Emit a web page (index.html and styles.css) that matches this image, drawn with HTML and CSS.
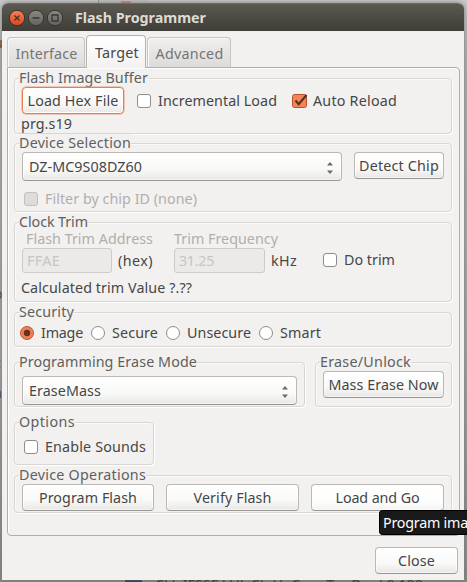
FILE: index.html
```html
<!DOCTYPE html>
<html lang="en">
<head>
<meta charset="utf-8">
<title>Flash Programmer</title>
<link rel="stylesheet" href="styles.css">
</head>
<body>
<div class="desktop" aria-hidden="true">
  <i class="bit top"></i><i class="bit orange"></i><i class="bit navy"></i>
  <span class="behind">CLL IFSSF LUL Ch H- C--- - T--- D- --l 0 100</span>
  <span class="edge e1">u</span><span class="edge e2">o</span><span class="edge e3">z</span><span class="edge e4">a</span>
</div>
<main class="window">
  <header class="titlebar">
    <svg class="controls" width="56" height="18" viewBox="0 0 56 18">
      <defs>
        <linearGradient id="red" x1="0" y1="0" x2="0" y2="1"><stop offset="0" stop-color="#f98058"/><stop offset="1" stop-color="#dc4717"/></linearGradient>
        <linearGradient id="gray" x1="0" y1="0" x2="0" y2="1"><stop offset="0" stop-color="#8b8982"/><stop offset="1" stop-color="#62615b"/></linearGradient>
      </defs>
      <g stroke="#34332e"><circle cx="9" cy="9" r="7.7" fill="url(#red)"/><circle cx="28" cy="9" r="7.7" fill="url(#gray)"/><circle cx="47" cy="9" r="7.7" fill="url(#gray)"/></g>
      <g fill="none" stroke="#3a3530" stroke-width="1.3"><path d="M6.5 6.5l5 5M11.5 6.5l-5 5M24.5 9h7"/><path d="M44 6h6v6h-6z"/></g>
    </svg>
    <h1 data-w="131">Flash Programmer</h1>
  </header>
  <nav class="tabs">
    <div class="tab t-interface"><span data-w="62">Interface</span></div>
    <div class="tab active"><span data-w="44">Target</span></div>
    <div class="tab t-advanced"><span data-w="68">Advanced</span></div>
  </nav>
  <section class="pane">
    <div class="group g-buffer">
      <div class="legend"><span data-w="129">Flash Image Buffer</span></div>
      <div class="row r-load">
        <div class="btn focus"><span data-w="91">Load Hex File</span></div>
        <i class="check c-inc"></i><span data-w="119">Incremental Load</span>
        <svg class="checked" width="17" height="16" viewBox="0 0 17 16"><rect x=".5" y="1.5" width="14" height="13" rx="2" fill="#f28457" stroke="#b7522d"/><path d="M3.5 7.5l3.2 3.7L14.5 2" fill="none" stroke="#5b2c1c" stroke-width="2"/></svg>
        <span data-w="84">Auto Reload</span>
      </div>
      <div class="file"><span data-w="51">prg.s19</span></div>
    </div>
    <div class="group g-device">
      <div class="legend"><span data-w="112">Device Selection</span></div>
      <div class="row r-device">
        <div class="btn combo wide"><span data-w="113">DZ-MC9S08DZ60</span><svg width="6" height="12" viewBox="0 0 6 12"><path d="M0 3.5L3 0l3 3.5zM0 8.5L3 12l3-3.5z" fill="#6a6a68"/></svg></div>
        <div class="btn detect"><span data-w="80">Detect Chip</span></div>
      </div>
      <div class="row r-filter dim"><i class="check off"></i><span data-w="152">Filter by chip ID (none)</span></div>
    </div>
    <div class="group g-clock">
      <div class="legend"><span data-w="69">Clock Trim</span></div>
      <div class="row r-labels dim"><span class="addr"><span data-w="127">Flash Trim Address</span></span><span data-w="104">Trim Frequency</span></div>
      <div class="row r-trim">
        <div class="field"><span data-w="33">FFAE</span></div><span class="unit hex"><span data-w="35">(hex)</span></span>
        <div class="field freq"><span data-w="35">31.25</span></div><span class="unit khz"><span data-w="26">kHz</span></span>
        <i class="check"></i><span class="dotrim" data-w="51">Do trim</span>
      </div>
      <div class="calc"><span data-w="171">Calculated trim Value ?.??</span></div>
    </div>
    <div class="group g-security">
      <div class="legend"><span data-w="55">Security</span></div>
      <div class="row radios">
        <i class="radio on"></i><span class="o1"><span data-w="42">Image</span></span>
        <i class="radio"></i><span class="o2"><span data-w="46">Secure</span></span>
        <i class="radio"></i><span class="o3"><span data-w="64">Unsecure</span></span>
        <i class="radio"></i><span data-w="41">Smart</span>
      </div>
    </div>
    <div class="pair">
      <div class="group g-mode">
        <div class="legend"><span data-w="178">Programming Erase Mode</span></div>
        <div class="btn combo"><span data-w="72">EraseMass</span><svg width="6" height="12" viewBox="0 0 6 12"><path d="M0 3.5L3 0l3 3.5zM0 8.5L3 12l3-3.5z" fill="#6a6a68"/></svg></div>
      </div>
      <div class="group g-erase">
        <div class="legend"><span data-w="91">Erase/Unlock</span></div>
        <div class="btn"><span data-w="110">Mass Erase Now</span></div>
      </div>
    </div>
    <div class="group g-options">
      <div class="legend"><span data-w="56">Options</span></div>
      <div class="row r-sounds"><i class="check"></i><span data-w="101">Enable Sounds</span></div>
    </div>
    <div class="group g-ops">
      <div class="legend"><span data-w="127">Device Operations</span></div>
      <div class="row r-ops">
        <div class="btn"><span data-w="98">Program Flash</span></div>
        <div class="btn"><span data-w="78">Verify Flash</span></div>
        <div class="btn hover"><span data-w="84">Load and Go</span></div>
      </div>
    </div>
  </section>
  <footer><div class="btn close"><span data-w="37">Close</span></div></footer>
</main>
<div class="tooltip"><span data-w="85">Program ima</span></div>
<script src="fit.js"></script>
</body>
</html>
```
FILE: styles.css
```css
* { box-sizing: border-box; }
html, body { margin: 0; height: 100%; overflow: hidden; }
body { position: relative; width: 467px; height: 582px; padding: 3px 3px 2px 2px; background: linear-gradient(#cacaca, #b2b2b2 8%, #a3a3a3 60%, #858585); font: 14.3px/18px "Noto Sans", "Open Sans", sans-serif; color: #464646; white-space: nowrap; }
i { display: block; flex: none; }
span { display: inline-block; flex: none; }

.desktop { position: absolute; inset: 0; overflow: hidden; }
.bit { position: absolute; }
.bit.top { left: 98px; top: 0; width: 50px; height: 3px; background: #c2c2c2; border-left: 1px solid #999; }
.bit.orange { left: 121px; top: 1px; width: 10px; height: 2px; background: #c78a69; }
.bit.navy { left: 125px; bottom: 0; width: 17px; height: 2px; background: #1c3152; }
.behind { position: absolute; left: 155px; top: 576px; color: #222; }
.edge { position: absolute; left: -6px; color: #453b31; }
.e1 { top: 34px; } .e2 { top: 285px; } .e3 { top: 354px; } .e4 { top: 384px; }

.window { position: relative; display: flex; flex-direction: column; width: 462px; height: 577px; background: #f2f1f0; border-radius: 6px 6px 0 0; box-shadow: 0 0 5px #777; }
.titlebar { flex: none; display: flex; align-items: center; height: 28px; padding-left: 6px; border-radius: 6px 6px 0 0; background: linear-gradient(#5b5950, #3e3d38); border-top: 1px solid #6d6b62; }
.controls { flex: none; }
h1 { margin: 0 0 0 11px; font-size: 14.3px; line-height: 18px; font-weight: 700; color: #dfdbd2; }

.tabs { flex: none; display: flex; align-items: flex-end; gap: 1px; height: 37px; margin: 0 5px -1px; position: relative; z-index: 1; }
.tab { display: flex; align-items: center; justify-content: center; height: 30px; margin-bottom: 1px; padding: 2px 0 0 1px; border: 1px solid #c5c4c2; border-bottom: 0; border-radius: 4px 4px 0 0; background: linear-gradient(#f0efee, #dcdbda); box-shadow: inset 1px 1px #faf9f9; color: #757573; }
.t-interface { width: 78px; }
.t-advanced { width: 84px; }
.tab.active { width: 60px; height: 33px; margin-bottom: 0; padding: 1px 0 0 2px; border-color: #b4b3b0; background: linear-gradient(#fff, #f2f1f0); color: #464646; }

.pane { flex: none; width: 453px; height: 469px; margin-left: 5px; padding: 10px 7px 0 6px; border: 1px solid #b0aeab; border-radius: 1px 4px 4px 4px; box-shadow: inset 1px 1px #fff; }
.group { border: 1px solid #d8d6d3; border-radius: 4px; box-shadow: 1px 1px #fff, inset 1px 1px #fafafa; }
.legend { width: max-content; height: 18px; margin: -10px 0 0 4px; background: #f2f1f0; color: #60605e; }
.row { display: flex; align-items: center; }
.dim { color: #b2aeaa; }

.btn { display: flex; align-items: center; justify-content: center; height: 27px; border: 1px solid #bbb7b2; border-bottom-color: #979591; border-radius: 4px; background: linear-gradient(#fff, #f9f9f8 60%, #e8e7e6); box-shadow: inset 0 0 0 1px #fff8; }
.btn.focus { width: 102px; border: 1px solid #e97d50; box-shadow: 0 0 0 .5px #ec9b78, inset 0 0 0 1px #fff; }
.btn.hover { background: linear-gradient(#fff, #fdfdfd 70%, #f2f2f1); }
.combo { height: 29px; justify-content: space-between; padding: 0 8px 0 6px; }
.combo svg { margin-top: 3px; }
.check { width: 14px; height: 14px; border: 1px solid #8d8c89; border-radius: 3px; background: #fff; margin-right: 7px; }
.check.off { border-color: #c3c0bd; background: #dedcda; }

.g-buffer { height: 56px; }
.r-load { height: 27px; margin-left: 7px; }
.c-inc { margin-left: 13px; }
.checked { flex: none; margin: 0 4px 0 15px; }
.file { margin: 1px 0 0 6px; }

.g-device { height: 69px; margin-top: 9px; }
.r-device { align-items: flex-start; margin-left: 7px; gap: 12px; }
.wide { width: 320px; }
.detect { width: 90px; }
.r-filter { margin: 9px 0 0 9px; }

.g-clock { height: 80px; margin-top: 10px; }
.r-labels { height: 18px; margin: -1px 0 0 11px; }
.addr { width: 148px; }
.r-trim { margin: 0 0 0 7px; height: 25px; }
.field { width: 90px; height: 25px; border: 1px solid #cecbc8; border-radius: 3px; background: #ebeae9; padding: 3px 0 0 4px; color: #c9c5c2; line-height: 18px; }
.freq { width: 91px; }
.unit { margin-left: 6px; }
.hex { width: 56px; }
.khz { width: 52px; }
.r-trim .check { margin-bottom: 1px; }
.dotrim { margin-top: -2px; }
.calc { margin: 6px 0 0 6px; }

.g-security { height: 35px; margin-top: 10px; }
.radios { margin: 3px 0 0 5px; }
.radio { width: 14px; height: 14px; border: 1px solid #8d8c89; border-radius: 50%; background: #fff; margin-right: 7px; }
.radio.on { border-color: #b4532e; background: radial-gradient(circle, #673321 0 3px, #f18154 3.7px); }
.o1 { width: 50px; } .o2 { width: 54px; } .o3 { width: 72px; }

.pair { display: flex; gap: 10px; margin-top: 15px; }
.g-mode { width: 291px; height: 45px; }
.g-mode .btn { width: 275px; margin: 5px 0 0 7px; }
.g-erase { width: 137px; height: 45px; }
.g-erase .btn { width: 121px; margin-left: 7px; }

.g-options { width: 140px; height: 43px; margin-top: 15px; }
.r-sounds { margin: 7px 0 0 9px; }
.g-ops { height: 38px; margin-top: 10px; }
.r-ops { gap: 12px; margin-left: 7px; }
.r-ops .btn { width: 133px; }
.r-ops .btn:first-child { width: 132px; }

footer { display: flex; justify-content: flex-end; padding: 11px 6px 0 0; }
.close { width: 83px; }
.tooltip { position: absolute; left: 379px; top: 510px; width: 88px; height: 25px; padding: 3px 0 0 3px; overflow: hidden; border: 1px solid #000; border-right: 0; border-radius: 4px 0 0 4px; background: #191919; color: #fff; }
```
FILE: fit.js
```js
// Tracks each label to its designed width in pixels.
document.querySelectorAll('[data-w]').forEach(function (el) {
  var range = document.createRange();
  range.selectNodeContents(el);
  var natural = range.getBoundingClientRect().width;
  var gap = (Number(el.dataset.w) - natural) / el.textContent.length;
  el.style.letterSpacing = gap.toFixed(3) + 'px';
});
```
